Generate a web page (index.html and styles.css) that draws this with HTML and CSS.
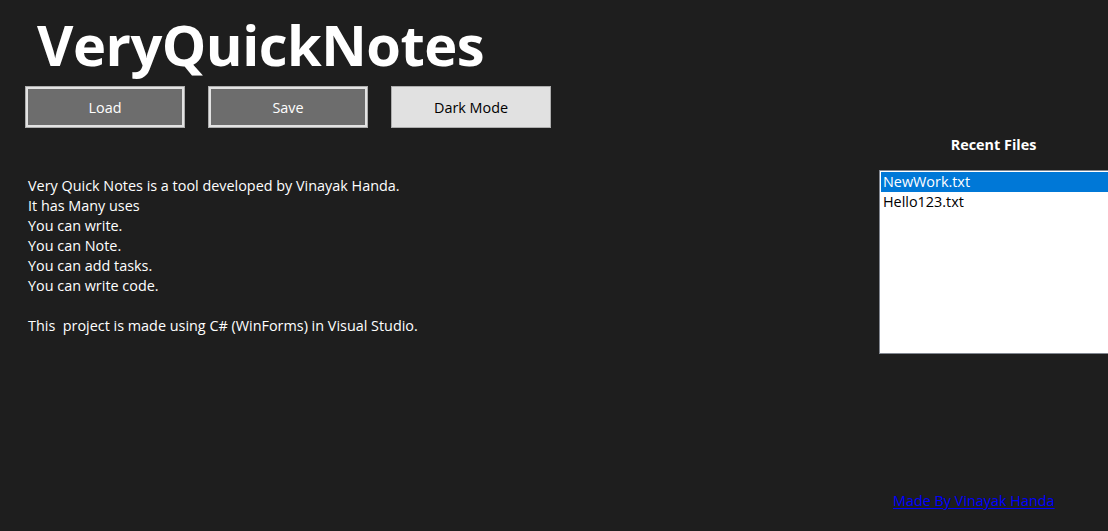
FILE: index.html
```html
<!DOCTYPE html>
<html>
<head>
<meta charset="utf-8">
<link rel="stylesheet" href="styles.css">
</head>
<body>
<div class="app">
  <div class="left">
    <h1 class="title">VeryQuickNotes</h1>
    <div class="buttons">
      <button class="btn btn-dark">Load</button>
      <button class="btn btn-dark">Save</button>
      <button class="btn btn-light">Dark Mode</button>
    </div>
    <div class="notes">
      <div>Very Quick Notes is a tool developed by Vinayak Handa.</div>
      <div>It has Many uses</div>
      <div>You can write.</div>
      <div>You can Note.</div>
      <div>You can add tasks.</div>
      <div>You can write code.</div>
      <div>&nbsp;</div>
      <div>This&nbsp; project is made using C# (WinForms) in Visual Studio.</div>
    </div>
  </div>
  <div class="right">
    <div class="recent-title">Recent Files</div>
    <div class="listbox">
      <div class="item selected">NewWork.txt</div>
      <div class="item">Hello123.txt</div>
    </div>
    <a class="credit" href="#">Made By Vinayak Handa</a>
  </div>
</div>
</body>
</html>
```
FILE: styles.css
```css
html, body {
  margin: 0;
  padding: 0;
  background: #1e1e1e;
  overflow: hidden;
}
.app {
  display: flex;
  justify-content: space-between;
  width: 1108px;
  height: 531px;
  font-family: "Open Sans", "Noto Sans", sans-serif;
  color: #ffffff;
  overflow: hidden;
}
.left {
  display: flex;
  flex-direction: column;
  padding-left: 25px;
}
.title {
  margin: 0;
  padding: 6px 0 0 12px;
  font-size: 56px;
  font-weight: 700;
  line-height: 76px;
  letter-spacing: -0.5px;
  height: 80px;
}
.buttons {
  display: flex;
  gap: 23px;
  margin-top: 0;
}
.btn {
  width: 160px;
  height: 42px;
  box-sizing: border-box;
  font-family: "Open Sans", "Noto Sans", sans-serif;
  font-size: 14.4px;
  padding: 0;
}
.btn-dark {
  background: #6d6d6d;
  color: #ffffff;
  border: 1px solid #adadad;
  box-shadow: inset 0 0 0 2px #e3e3e3;
}
.btn-light {
  background: #e1e1e1;
  color: #000000;
  border: 1px solid #adadad;
}
.notes {
  margin-top: 48px;
  padding-left: 3px;
  font-size: 14.4px;
  line-height: 20px;
}
.right {
  width: 229px;
  display: flex;
  flex-direction: column;
}
.recent-title {
  margin-top: 135px;
  text-align: center;
  font-size: 14.4px;
  font-weight: 700;
  line-height: 20px;
}
.listbox {
  margin-top: 15px;
  width: 240px;
  height: 184px;
  box-sizing: border-box;
  background: #ffffff;
  border: 1px solid #828790;
  padding: 1px;
}
.item {
  color: #000000;
  font-size: 14.4px;
  line-height: 20px;
  padding-left: 2px;
}
.item.selected {
  background: #0078d7;
  color: #ffffff;
}
.credit {
  margin-top: auto;
  margin-bottom: 20px;
  margin-left: 14px;
  color: #0000ff;
  font-size: 14.4px;
  line-height: 20px;
  text-decoration: underline;
  text-decoration-thickness: 1px;
  text-underline-offset: 2px;
}
```
